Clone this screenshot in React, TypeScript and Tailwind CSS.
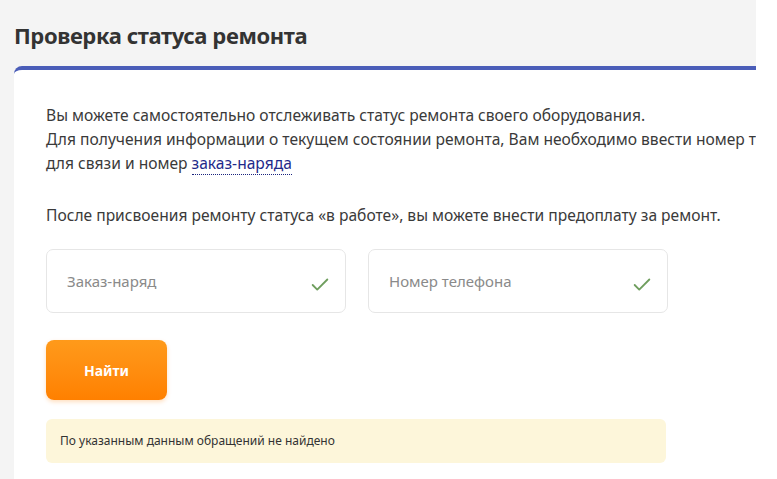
import { Check } from "lucide-react";

const font = { fontFamily: '"Noto Sans", "Open Sans", sans-serif' };

function Field({ label }: { label: string }) {
  return (
    <div className="flex h-[64px] w-[300px] items-center justify-between rounded-[7px] border border-[#e6e6e6] bg-white pl-[20px] pr-[14px]">
      <span className="text-[15px] text-[#8a8a8a]">{label}</span>
      <Check className="mt-[8px] h-[22px] w-[22px] text-[#6f9e5e]" strokeWidth={2} />
    </div>
  );
}

export default function App() {
  return (
    <div className="flex h-[479px] w-[777px] overflow-hidden bg-white" style={font}>
      <div className="w-[756px] shrink-0 bg-[#f4f4f4] pl-[14px]">
        <h1 className="pt-[19px] text-[22px] font-bold leading-[32px] tracking-[-0.4px] text-[#333]">
          Проверка статуса ремонта
        </h1>

        {/* card */}
        <div className="mt-[15px] h-[420px] overflow-hidden rounded-tl-[8px] border-t-[4px] border-[#4a5db8] bg-white pl-[32px] pt-[33px]">
          <div className="whitespace-nowrap text-[15.6px] leading-[24px] text-[#3a3a3a]">
            <p>Вы можете самостоятельно отслеживать статус ремонта своего оборудования.</p>
            <p>Для получения информации о текущем состоянии ремонта, Вам необходимо ввести номер телефона</p>
            <p>
              для связи и номер{" "}
              <a className="border-b border-dotted border-[#1a237e] text-[#1f2a8a]">заказ-наряда</a>
            </p>
            <p className="mt-[28px]">После присвоения ремонту статуса «в работе», вы можете внести предоплату за ремонт.</p>
          </div>

          <div className="mt-[22px] flex gap-[22px]">
            <Field label="Заказ-наряд" />
            <Field label="Номер телефона" />
          </div>

          <button className="mt-[27px] h-[60px] w-[121px] rounded-[8px] bg-gradient-to-b from-[#ff9a1a] to-[#ff8000] text-[14px] font-bold text-white shadow-[0_2px_4px_rgba(255,128,0,0.25)]">
            Найти
          </button>

          <div className="mt-[19px] flex h-[44px] w-[620px] items-center rounded-[6px] bg-[#fdf6da] pl-[14px] text-[12px] text-[#333]">
            По указанным данным обращений не найдено
          </div>
        </div>
      </div>
    </div>
  );
}
